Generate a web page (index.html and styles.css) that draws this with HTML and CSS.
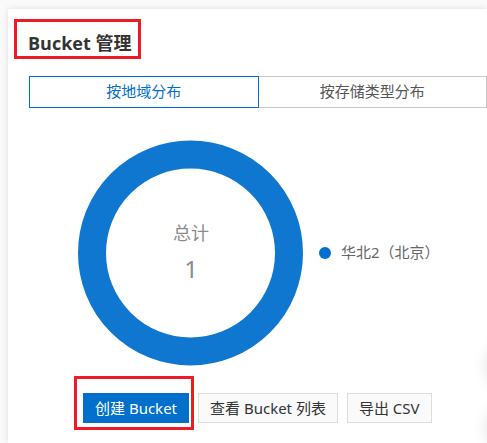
FILE: index.html
```html
<!DOCTYPE html>
<html lang="zh-CN">
<head>
<meta charset="utf-8">
<meta name="viewport" content="width=device-width, initial-scale=1">
<title>Bucket 管理</title>
<link rel="stylesheet" href="styles.css">
</head>
<body>
<main class="card">
  <h1 class="title"><span class="marked marked-title">Bucket 管理</span></h1>
  <div class="tabs" role="tablist">
    <button class="tab tab-active" type="button" role="tab" aria-selected="true">按地域分布</button>
    <button class="tab" type="button" role="tab" aria-selected="false">按存储类型分布</button>
  </div>
  <section class="chart">
    <div class="donut">
      <svg class="ring" viewBox="0 0 226 226" aria-hidden="true">
        <circle cx="112.5" cy="113" r="98.5" fill="none" stroke="#0f77d0" stroke-width="28"/>
      </svg>
      <div class="total">
        <span class="total-label">总计</span>
        <span class="total-value">1</span>
      </div>
    </div>
    <div class="legend"><span class="dot"></span><span class="legend-text">华北2（北京）</span></div>
  </section>
  <div class="actions">
    <span class="marked marked-button"><button class="button button-primary" type="button">创建 Bucket</button></span>
    <button class="button" type="button">查看 Bucket 列表</button>
    <button class="button" type="button">导出 CSV</button>
  </div>
</main>
<aside class="float-bar"><span class="float-item"></span><span class="float-item"></span></aside>
</body>
</html>
```
FILE: styles.css
```css
* {
  box-sizing: border-box;
}

body {
  margin: 0;
  padding: 9px 0 0 8px;
  min-height: 100vh;
  display: flex;
  flex-direction: column;
  overflow: hidden;
  background: #fafafa;
  color: #333;
  font-family: "Noto Sans", "Noto Sans CJK SC", sans-serif;
  font-size: 15px;
}

.card {
  flex: 1;
  padding: 22px 0 20px 20px;
  background: #fff;
  box-shadow: 0 0 6px rgba(0, 0, 0, 0.12);
}

.title {
  margin: 0;
  font-family: "Open Sans", "Noto Sans CJK SC", sans-serif;
  font-size: 18px;
  font-weight: 700;
  line-height: 24px;
}

/* Red callout frames drawn around an element */
.marked {
  position: relative;
  display: inline-block;
}

.marked::after {
  content: "";
  position: absolute;
  border: 3px solid #ed1c24;
  pointer-events: none;
}

.marked-title::after {
  inset: -12px -10px -4px -14px;
}

.marked-button::after {
  inset: -17px -5px -7px -9px;
}

.tabs {
  display: flex;
  margin: 21px 0 0 1px;
}

.tab {
  flex: 1;
  height: 32px;
  padding: 0 0 4px;
  border: 1px solid #c8c8c8;
  border-left: 0;
  background: #fff;
  color: #555;
  font: inherit;
}

.tab-active {
  border: 1px solid #0070cc;
  color: #0070cc;
}

.chart {
  display: flex;
  align-items: center;
  margin: 32px 0 0 50px;
  gap: 15px;
}

.donut {
  display: grid;
  place-items: center;
}

.ring,
.total {
  grid-area: 1 / 1;
}

.ring {
  display: block;
  width: 226px;
}

.total {
  display: flex;
  flex-direction: column;
  align-items: center;
  padding-bottom: 4px;
  color: #8c8c8c;
}

.total-label {
  font-size: 18px;
  line-height: 36px;
}

.total-value {
  font-size: 24px;
  line-height: 36px;
}

.legend {
  display: flex;
  align-items: center;
  gap: 10px;
  color: #666;
  white-space: nowrap;
}

.legend-text {
  padding-bottom: 4px;
}

.dot {
  width: 12px;
  height: 12px;
  border-radius: 50%;
  background: #0070cc;
}

.actions {
  display: flex;
  margin: 27px 0 0 55px;
  gap: 9px;
}

.button {
  display: block;
  height: 30px;
  padding: 0 11px;
  border: 1px solid #ddd;
  background: #fafafa;
  color: #333;
  font: inherit;
  line-height: 28px;
  white-space: nowrap;
}

.button-primary {
  border-color: #0070cc;
  background: #0070cc;
  color: #fff;
}

/* Floating round buttons parked beyond the right edge; only their shadows show */
.float-bar {
  position: fixed;
  left: 100%;
  bottom: -8px;
  display: grid;
  gap: 16px;
}

.float-item {
  width: 46px;
  height: 46px;
  border-radius: 50%;
  box-shadow: 0 0 16px rgba(0, 0, 0, 0.12);
}
```
